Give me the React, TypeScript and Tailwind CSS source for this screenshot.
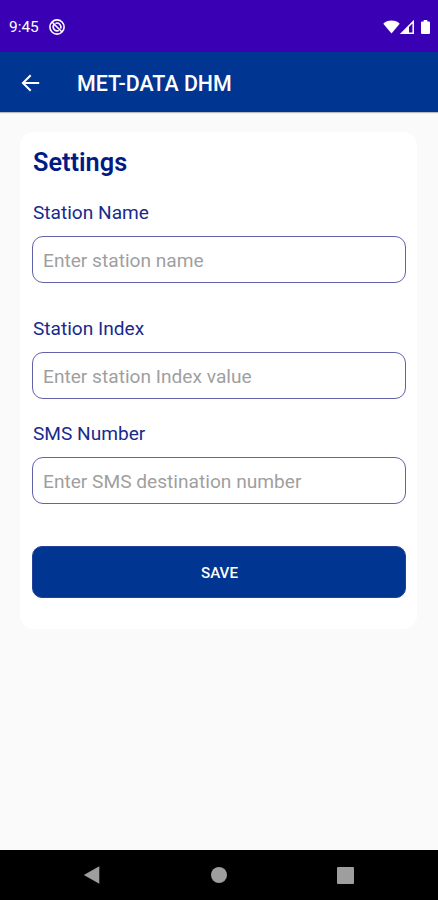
import { type ReactNode } from "react";

// ─── Form fields ───
interface FieldConfig {
  id: string;
  label: string;
  placeholder: string;
  spacing: string;
}

const FIELDS: FieldConfig[] = [
  { id: "station-name", label: "Station Name", placeholder: "Enter station name", spacing: "mt-[20px]" },
  { id: "station-index", label: "Station Index", placeholder: "Enter station Index value", spacing: "mt-[32px]" },
  { id: "sms-number", label: "SMS Number", placeholder: "Enter SMS destination number", spacing: "mt-[21px]" },
];

function Field({ id, label, placeholder, spacing }: FieldConfig) {
  return (
    <div className={spacing}>
      <label htmlFor={id} className="block h-[28px] pl-px text-[19.1px] leading-[28px] text-[#182a8e]">
        {label}
      </label>
      <input
        id={id}
        type="text"
        placeholder={placeholder}
        className="mt-[9px] block h-[47px] w-full rounded-[11px] border border-[#6262a8] bg-white px-[10px] pt-px text-[19.15px] text-[#222222] outline-none placeholder:text-[#9f9f9f]"
      />
    </div>
  );
}

// ─── Status bar ───
function StatusBar() {
  return (
    <div className="flex h-[52px] items-center justify-between bg-[#3a00b3] pl-[9px] pr-[8px] pt-[2px] text-white">
      <div className="flex items-center gap-[11px]">
        <span className="w-[30px] text-[15.4px] leading-5">9:45</span>
        <svg className="-ml-px" width="16" height="16" viewBox="0 0 16 16" fill="none" stroke="currentColor">
          <circle cx="8" cy="8" r="7.1" strokeWidth="1.6" />
          <path d="M5.2 5.2a4 4 0 0 0 4.6 6.3M6.4 4.4a4 4 0 0 1 5.2 5.2" strokeWidth="1.6" />
          <path d="M3 3l10 10" strokeWidth="1.6" />
        </svg>
      </div>
      <div className="flex items-center">
        <svg width="17" height="14" viewBox="0 0 17 14" fill="currentColor">
          <path d="M8.5 13.6L.3 3.8C2.2 1.3 5.3.4 8.5.4s6.3.9 8.2 3.4z" />
        </svg>
        <svg width="14" height="14" viewBox="0 0 14 14" fill="none" stroke="currentColor">
          <path d="M1.6 13.2L13.2 1.6v11.6z" strokeWidth="1.5" />
          <path d="M1.4 13.4L9 5.8v7.6z" fill="currentColor" stroke="none" />
        </svg>
        <svg className="ml-[7px]" width="9" height="14" viewBox="0 0 9 15" preserveAspectRatio="none" fill="currentColor">
          <path d="M2.7 0h3.6v1.5h1.5q1.2 0 1.2 1.2v11.1Q9 15 7.8 15H1.2Q0 15 0 13.8V2.7Q0 1.5 1.2 1.5h1.5z" />
        </svg>
      </div>
    </div>
  );
}

// ─── App bar ───
function AppBar({ title }: { title: string }) {
  return (
    <header className="flex h-[60px] items-center bg-[#003591] pl-[21px] text-white shadow-[0_1px_1px_rgba(0,0,0,0.25)]">
      <button type="button" aria-label="Back" className="flex pt-px">
        <svg width="19" height="18" viewBox="0 0 19 18" fill="none" stroke="currentColor" strokeWidth="2">
          <path d="M18.2 9H2M9.7 1.2L1.9 9l7.8 7.8" />
        </svg>
      </button>
      <h1 className="ml-[37px] pt-[3px] text-[21.4px] leading-7 font-medium">{title}</h1>
    </header>
  );
}

// ─── System navigation ───
function NavBar() {
  return (
    <nav className="flex h-[50px] items-center justify-between bg-black pl-[83px] pr-[84px] text-[#9e9e9e]">
      <svg width="17" height="18" viewBox="0 0 17 18" fill="currentColor">
        <path d="M.8 9L16.3.2v17.6z" />
      </svg>
      <span className="ml-[1px] size-4 rounded-full bg-current" />
      <span className="size-[17px] rounded-[1px] bg-current" />
    </nav>
  );
}

function Card({ children }: { children: ReactNode }) {
  return <section className="h-[497px] rounded-[14px] bg-white pr-[11px] pl-[12px] pt-[15px]">{children}</section>;
}

export default function App() {
  return (
    <div className="flex h-[900px] w-[438px] flex-col bg-[#fafafa] font-[Roboto,sans-serif]">
      <StatusBar />
      <AppBar title="MET-DATA DHM" />
      <main className="flex-1 px-[20px] pt-[20px] pr-[21px]">
        <Card>
          <h2 className="pl-px text-[25.3px] leading-[32px] font-semibold text-[#001b85]">Settings</h2>
          {FIELDS.map((field) => (
            <Field key={field.id} {...field} />
          ))}
          <button
            type="button"
            className="mt-[42px] block h-[52px] w-full rounded-[10px] border border-[#26409a] bg-[#003591] pt-[2px] pl-px text-[15.2px] font-medium text-white"
          >
            SAVE
          </button>
        </Card>
      </main>
      <NavBar />
    </div>
  );
}
